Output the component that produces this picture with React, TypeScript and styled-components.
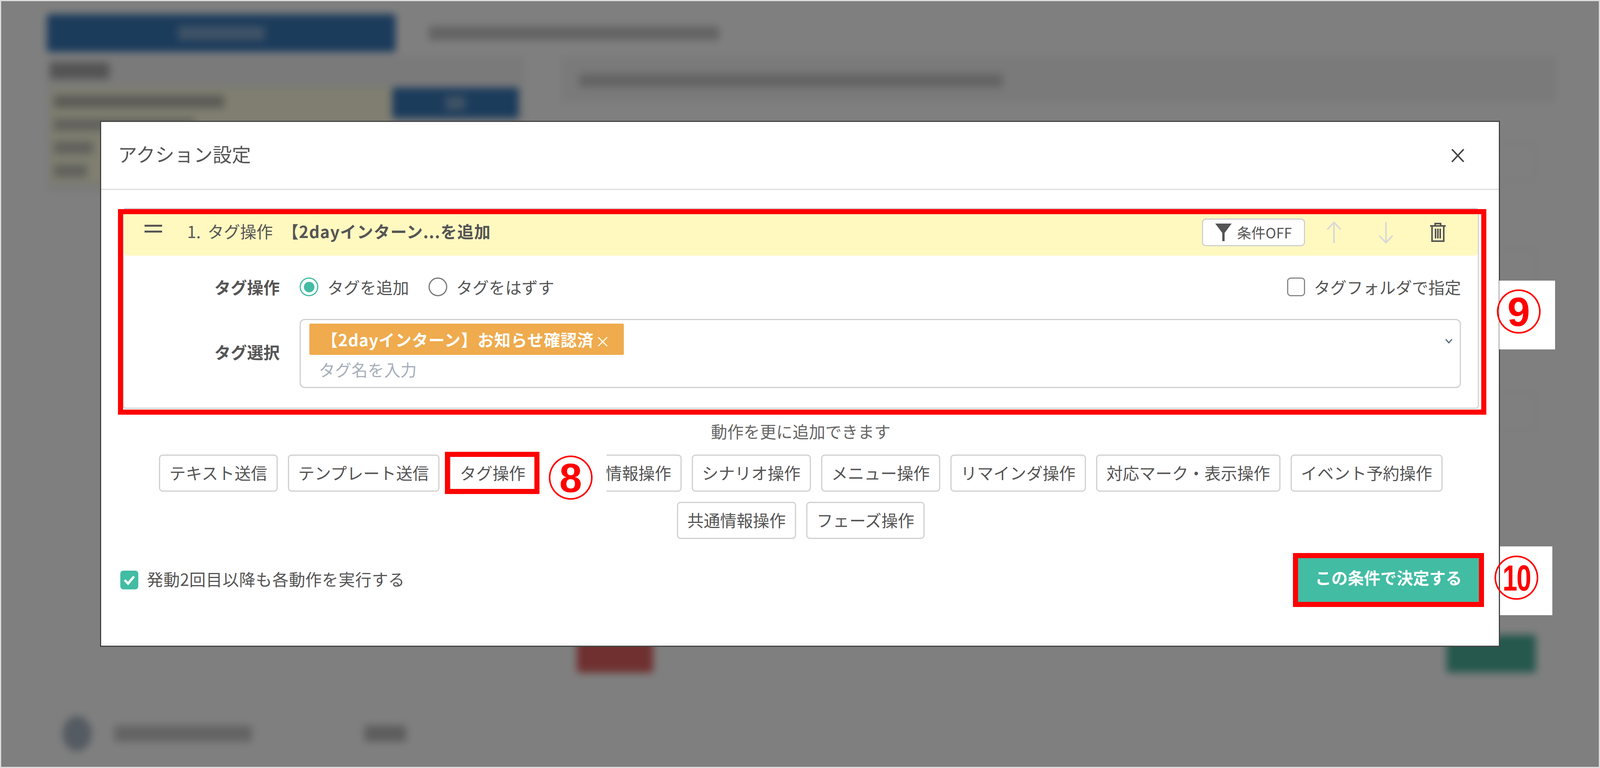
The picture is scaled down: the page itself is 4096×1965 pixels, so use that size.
import React from 'react';
import styled, { createGlobalStyle } from 'styled-components';

const GlobalStyle = createGlobalStyle`
  html, body {
    margin: 0;
    padding: 0;
    background: #fff;
    overflow: hidden;
  }
  * { box-sizing: border-box; }
  body {
    font-family: "Noto Sans CJK JP", "Noto Sans", sans-serif;
    font-size: 41.8px;
    line-height: 1.2;
    color: #555;
  }
`;

const Screen = styled.div`
  position: relative;
  width: 100vw;
  height: 100vh;
  overflow: hidden;
  border: 3px solid #dcdcdc;
`;

/* page behind the dialog: out of focus, so only rough shapes */
const BlurredPage = styled.div`
  height: 100%;
  background: #fff;
  padding: 33px 0 0 117px;
  filter: blur(10px);
`;

const PageTop = styled.div`
  display: flex;
  align-items: center;
  gap: 84px;
`;

const PrimaryBlock = styled.div<{ $w: number; $h: number }>`
  width: ${(p) => p.$w}px;
  height: ${(p) => p.$h}px;
  flex: none;
  background: #3878b8;
  border-radius: 6px;
  display: flex;
  align-items: center;
  justify-content: center;
`;

const Bar = styled.div<{ $w: number; $h?: number; $c?: string; $ml?: number }>`
  width: ${(p) => p.$w}px;
  height: ${(p) => p.$h ?? 30}px;
  flex: none;
  margin-left: ${(p) => p.$ml ?? 0}px;
  background: ${(p) => p.$c ?? '#c8c8c8'};
`;

const PageMain = styled.div`
  display: flex;
  gap: 92px;
  margin-top: 12px;
`;

const LeftColumn = styled.div`
  width: 1225px;
  height: 345px;
  background: #f4f4f4;
  padding: 15px 17px 0 8px;
`;

const FieldRow = styled.div`
  display: flex;
  margin-top: 22px;
`;

const YellowField = styled.div`
  width: 880px;
  height: 245px;
  background: #fffde0;
  padding: 20px 0 0 10px;
  display: flex;
  flex-direction: column;
  gap: 27px;
`;

const RightColumn = styled.div`
  width: 2546px;
  height: 1576px;
  display: flex;
  flex-direction: column;
`;

const RightHead = styled.div`
  height: 117px;
  background: #f4f4f4;
  padding: 44px 46px 0;
`;

const GhostInput = styled.div<{ $top: number }>`
  height: 100px;
  margin: ${(p) => p.$top}px 50px 0 40px;
  border: 3px solid #ececec;
  border-radius: 8px;
`;

const RightFoot = styled.div`
  display: flex;
  justify-content: space-between;
  align-items: flex-end;
  margin-top: auto;
  padding: 0 51px 0 40px;
`;

const DangerBlock = styled.div`
  width: 195px;
  height: 90px;
  background: #e06060;
  border-radius: 6px;
`;

const SuccessBlock = styled.div`
  width: 229px;
  height: 97px;
  background: #4cb09a;
  border-radius: 6px;
`;

const AccountPanel = styled.div`
  width: 965px;
  height: 124px;
  margin: 94px 0 0 3px;
  border: 3px solid #f6f6f6;
  display: flex;
  align-items: center;
  padding-left: 34px;
`;

const Avatar = styled.div`
  width: 75px;
  height: 90px;
  flex: none;
  background: #aab6c4;
  border-radius: 50%;
`;

const Scrim = styled.div`
  position: absolute;
  inset: 0;
  background: rgba(0, 0, 0, 0.5);
  display: flex;
  justify-content: center;
  padding-top: 306px;
`;

const Modal = styled.div`
  position: relative;
  width: 3584px;
  height: 1346px;
  flex: none;
  background: #fff;
  border: 3px solid #454545;
`;

const ModalHeader = styled.div`
  height: 174px;
  padding: 0 88px 0 43px;
  border-bottom: 3px solid #dedede;
  display: flex;
  align-items: center;
  justify-content: space-between;
`;

const ModalTitle = styled.div`
  font-size: 49px;
  line-height: 1;
  margin-bottom: 10px;
  color: #555;
`;

const ModalBody = styled.div`
  padding: 46px 51px 0 55px;
`;

const ActionCard = styled.div`
  position: relative;
  border: 3px solid #d4d4d4;
  border-radius: 8px;
  height: 514px;
`;

const CardHead = styled.div`
  height: 119px;
  background: #fff9c0;
  border-radius: 0 0 8px 8px;
  display: flex;
  align-items: center;
  padding: 0 36px 0 53px;
`;

const DragHandle = styled.div`
  width: 45px;
  height: 20px;
  flex: none;
  margin: 0 64px 20px 0;
  border-top: 5px solid #555;
  border-bottom: 5px solid #555;
`;

const HeadType = styled.span`
  white-space: nowrap;
  word-spacing: 8px;
  margin-bottom: 6px;
`;

const HeadSummary = styled.span`
  white-space: nowrap;
  font-weight: 700;
  letter-spacing: 1.2px;
  margin: 0 auto 6px 24px;
`;

const ConditionButton = styled.div`
  width: 264px;
  height: 71px;
  flex: none;
  background: #fff;
  border: 3px solid #d0d0d0;
  border-radius: 10px;
  display: flex;
  align-items: center;
  justify-content: center;
  gap: 14px;
  font-size: 36.5px;
  white-space: nowrap;
  margin-right: 7px;
`;

const IconSlot = styled.div`
  width: 133px;
  flex: none;
  display: flex;
  justify-content: center;
`;

const FormGrid = styled.div`
  display: grid;
  grid-template-columns: 399px 1fr;
  column-gap: 51px;
  row-gap: 58px;
  padding: 56px 43px 0 0;
  align-items: center;
`;

const FieldLabel = styled.div<{ $lift?: number }>`
  font-weight: 700;
  line-height: 48px;
  text-align: right;
  white-space: nowrap;
  margin-bottom: ${(p) => p.$lift ?? 0}px;
`;

const OptionRow = styled.div`
  display: flex;
  align-items: center;
  height: 48px;
`;

const OptionLabel = styled.span`
  white-space: nowrap;
  margin-left: 23px;
`;

const RadioMark = styled.span<{ $on?: boolean }>`
  width: 48px;
  height: 48px;
  flex: none;
  border-radius: 50%;
  border: 3px solid ${(p) => (p.$on ? '#42bca3' : '#777')};
  display: flex;
  align-items: center;
  justify-content: center;
  margin-left: ${(p) => (p.$on ? 0 : 50)}px;

  &::after {
    content: '';
    display: ${(p) => (p.$on ? 'block' : 'none')};
    width: 27px;
    height: 27px;
    border-radius: 50%;
    background: #42bca3;
  }
`;

const EmptyCheck = styled.span`
  width: 46px;
  height: 48px;
  flex: none;
  margin-left: auto;
  border: 3px solid #888;
  border-radius: 9px;
`;

const TagInput = styled.div`
  position: relative;
  height: 177px;
  border: 3px solid #d0d0d0;
  border-radius: 13px;
  padding: 9px 0 0 22px;
`;

const TagChip = styled.div`
  display: inline-flex;
  align-items: center;
  height: 80px;
  padding: 0 34px 0 31px;
  background: #efab4d;
  border-radius: 3px;
  color: #fff;
  font-weight: 700;
  letter-spacing: 0.8px;
  white-space: nowrap;
`;

const ChipRemove = styled.span`
  font-size: 38px;
  font-weight: 400;
  margin: 8px 0 0 4px;
`;

const Placeholder = styled.div`
  margin: 9px 0 0 24px;
  line-height: 56px;
  color: #a6aebb;
`;

const Chevron = styled.svg`
  position: absolute;
  top: 47px;
  right: 18px;
`;

const AddHint = styled.div`
  margin-top: 27px;
  line-height: 61px;
  text-align: center;
  color: #666;
`;

const ActionButtons = styled.div`
  display: flex;
  flex-wrap: wrap;
  justify-content: center;
  gap: 26px;
  margin-top: 29px;
`;

const ActionButton = styled.div<{ $framed?: boolean; $covered?: boolean }>`
  position: relative;
  height: 95px;
  padding: 0 23.5px 3px ${(p) => (p.$covered ? 149.5 : 23.5)}px;
  background: #fff;
  border: 3px solid #d0d0d0;
  border-radius: 9px;
  display: flex;
  align-items: center;
  white-space: nowrap;
  font-size: 42px;
  color: #555;

  ${(p) =>
    p.$framed &&
    `
    &::after {
      content: '';
      position: absolute;
      top: -10px;
      bottom: -9px;
      left: -15px;
      right: -12px;
      border: 13px solid #f00;
    }
  `}
`;

const ModalFooter = styled.div`
  display: flex;
  align-items: center;
  justify-content: space-between;
  margin: 49px 0 0 -6px;
`;

const RepeatOption = styled.div`
  display: flex;
  align-items: center;
  gap: 22px;
  white-space: nowrap;
  letter-spacing: 0.65px;
`;

const RepeatLabel = styled.span`
  margin-bottom: 6px;
`;

const CheckedBox = styled.span`
  width: 46px;
  height: 48px;
  flex: none;
  background: #42bca3;
  border-radius: 8px;
  display: flex;
  align-items: center;
  justify-content: center;
`;

const ConfirmButton = styled.div`
  width: 463px;
  height: 112px;
  padding-bottom: 13px;
  background: #42bca3;
  outline: 13px solid #f00;
  color: #fff;
  font-weight: 700;
  display: flex;
  align-items: center;
  justify-content: center;
  white-space: nowrap;
`;

const CardFrame = styled.div`
  position: absolute;
  top: 0;
  left: -15px;
  right: -22px;
  bottom: -18px;
  border: 13px solid #f00;
`;

const NotePatch = styled.div<{ $x: number; $y: number; $w: number; $h: number }>`
  position: absolute;
  left: ${(p) => p.$x}px;
  top: ${(p) => p.$y}px;
  width: ${(p) => p.$w}px;
  height: ${(p) => p.$h}px;
  background: #fff;
`;

const NoteRing = styled.div<{ $x: number; $y: number }>`
  position: absolute;
  left: ${(p) => p.$x}px;
  top: ${(p) => p.$y}px;
  width: 112px;
  height: 113px;
  transform: translate(-50%, -50%);
  border: 4px solid #f00;
  border-radius: 50%;
  display: flex;
  align-items: center;
  justify-content: center;
  font-family: "Liberation Sans", sans-serif;
  font-size: 104px;
  line-height: 1;
  font-weight: 700;
  color: #f00;
`;

const NarrowDigits = styled.span`
  font-size: 92px;
  letter-spacing: -3px;
  transform: scaleX(0.74);
`;

const actionRows = [
  'テキスト送信',
  'テンプレート送信',
  'タグ操作',
  '情報操作',
  'シナリオ操作',
  'メニュー操作',
  'リマインダ操作',
  '対応マーク・表示操作',
  'イベント予約操作',
  '共通情報操作',
  'フェーズ操作',
];

const App: React.FC = () => {
  return (
    <Screen>
      <GlobalStyle />
      <BlurredPage>
        <PageTop>
          <PrimaryBlock $w={893} $h={97}>
            <Bar $w={222} $h={36} $c="#7fa6cc" />
          </PrimaryBlock>
          <Bar $w={744} $h={36} />
        </PageTop>
        <PageMain>
          <LeftColumn>
            <Bar $w={152} $h={42} $c="#a8a8a8" />
            <FieldRow>
              <YellowField>
                <Bar $w={436} $h={32} $c="#b8b8b0" />
                <Bar $w={360} $h={32} $c="#c4c4bc" />
                <Bar $w={100} $h={32} $c="#c4c4bc" />
                <Bar $w={84} $h={32} $c="#c4c4bc" />
              </YellowField>
              <PrimaryBlock $w={324} $h={79}>
                <Bar $w={50} $h={36} $c="#7fa6cc" />
              </PrimaryBlock>
            </FieldRow>
          </LeftColumn>
          <RightColumn>
            <RightHead>
              <Bar $w={1084} $h={34} />
            </RightHead>
            <GhostInput $top={100} />
            <GhostInput $top={174} />
            <GhostInput $top={265} />
            <RightFoot>
              <DangerBlock />
              <SuccessBlock />
            </RightFoot>
          </RightColumn>
        </PageMain>
        <AccountPanel>
          <Avatar />
          <Bar $w={352} $h={42} $ml={58} />
          <Bar $w={107} $h={42} $ml={288} $c="#bcbcbc" />
        </AccountPanel>
      </BlurredPage>

      <Scrim>
        <Modal>
          <ModalHeader>
            <ModalTitle>アクション設定</ModalTitle>
            <svg width="34" height="36" viewBox="0 0 34 36">
              <path d="M2 2 L32 34 M32 2 L2 34" stroke="#444" strokeWidth="4" fill="none" />
            </svg>
          </ModalHeader>

          <ModalBody>
            <ActionCard>
              <CardHead>
                <DragHandle />
                <HeadType>1. タグ操作</HeadType>
                <HeadSummary>【2dayインターン...を追加</HeadSummary>
                <ConditionButton>
                  <svg width="42" height="45" viewBox="0 0 42 45">
                    <path d="M0 0 H42 L24 24 V45 H18 V24 Z" fill="#555" />
                  </svg>
                  条件OFF
                </ConditionButton>
                <IconSlot>
                  <svg width="38" height="56" viewBox="0 0 38 56">
                    <path d="M19 55 V2 M2 20 L19 2 L36 20" stroke="#d8d8d8" strokeWidth="4" fill="none" />
                  </svg>
                </IconSlot>
                <IconSlot>
                  <svg width="38" height="56" viewBox="0 0 38 56">
                    <path d="M19 1 V54 M2 36 L19 54 L36 36" stroke="#d8d8d8" strokeWidth="4" fill="none" />
                  </svg>
                </IconSlot>
                <IconSlot>
                  <svg width="40" height="50" viewBox="0 0 40 50">
                    <path
                      d="M0 8 H40 M13 8 V2 H27 V8 M5 8 V47 H35 V8 M14 15 V40 M20 15 V40 M26 15 V40"
                      stroke="#555"
                      strokeWidth="4"
                      fill="none"
                    />
                  </svg>
                </IconSlot>
              </CardHead>

              <FormGrid>
                <FieldLabel>タグ操作</FieldLabel>
                <OptionRow>
                  <RadioMark $on />
                  <OptionLabel>タグを追加</OptionLabel>
                  <RadioMark />
                  <OptionLabel>タグをはずす</OptionLabel>
                  <EmptyCheck />
                  <OptionLabel>タグフォルダで指定</OptionLabel>
                </OptionRow>
                <FieldLabel $lift={10}>タグ選択</FieldLabel>
                <TagInput>
                  <TagChip>
                    【2dayインターン】お知らせ確認済
                    <ChipRemove>×</ChipRemove>
                  </TagChip>
                  <Placeholder>タグ名を入力</Placeholder>
                  <Chevron width="20" height="13" viewBox="0 0 20 13">
                    <path d="M2 2 L10 11 L18 2" stroke="#567" strokeWidth="3" fill="none" />
                  </Chevron>
                </TagInput>
              </FormGrid>
              <CardFrame />
            </ActionCard>

            <AddHint>動作を更に追加できます</AddHint>

            <ActionButtons>
              {actionRows.map((label) => (
                <ActionButton key={label} $framed={label === 'タグ操作'} $covered={label === '情報操作'}>
                  {label}
                </ActionButton>
              ))}
            </ActionButtons>

            <ModalFooter>
              <RepeatOption>
                <CheckedBox>
                  <svg width="30" height="26" viewBox="0 0 30 26">
                    <path d="M3 13 L12 22 L27 4" stroke="#fff" strokeWidth="6" fill="none" />
                  </svg>
                </CheckedBox>
                <RepeatLabel>発動2回目以降も各動作を実行する</RepeatLabel>
              </RepeatOption>
              <ConfirmButton>この条件で決定する</ConfirmButton>
            </ModalFooter>
          </ModalBody>

          <NotePatch $x={3579} $y={406} $w={143} $h={176} />
          <NotePatch $x={3581} $y={1086} $w={134} $h={176} />
          <NotePatch $x={1125} $y={840} $w={169} $h={130} />
          <NoteRing $x={3629} $y={485}>9</NoteRing>
          <NoteRing $x={3623} $y={1166}>
            <NarrowDigits>10</NarrowDigits>
          </NoteRing>
          <NoteRing $x={1202} $y={910}>8</NoteRing>
        </Modal>
      </Scrim>
    </Screen>
  );
};

export default App;
